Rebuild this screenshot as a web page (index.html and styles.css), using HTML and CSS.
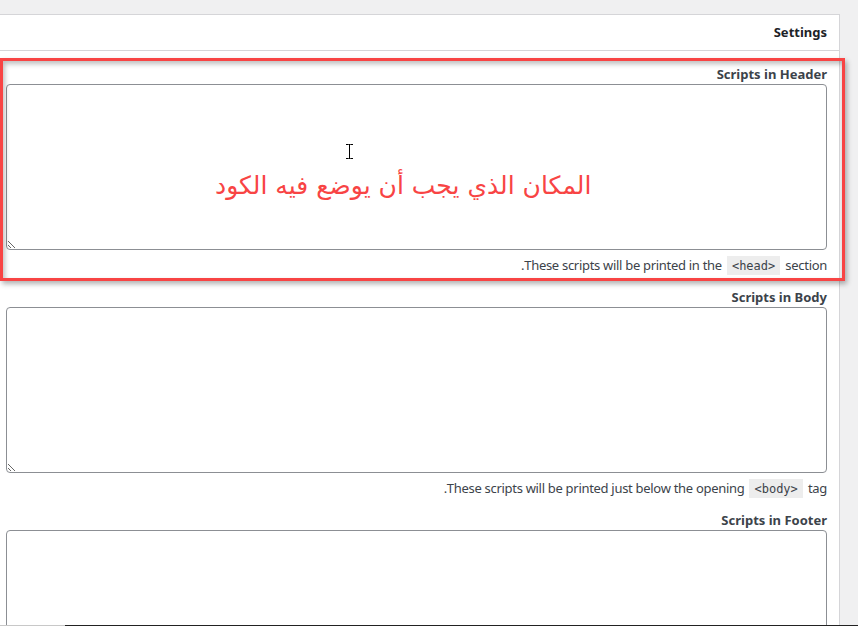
FILE: index.html
```html
<!DOCTYPE html>
<html>
<head>
  <meta name="viewport" content="width=device-width, initial-scale=1.0">
  <title>Settings</title>
  <link rel="stylesheet" href="styles.css">
</head>
<body>
  <div class="panel" dir="rtl">
    <div class="panel-head">Settings</div>

    <div class="panel-body">
      <div class="field is-marked">
        <label class="field-label" for="header-scripts">Scripts in Header</label>
        <textarea id="header-scripts" class="field-input"></textarea>
        <p class="field-desc">These scripts will be printed in the <code>&lt;head&gt;</code> section.</p>

        <!-- annotation over the first box -->
        <span class="note">المكان الذي يجب أن يوضع فيه الكود</span>
        <svg class="ibeam" width="7" height="15" viewBox="0 0 7 15">
          <path d="M0 0.5h2.5M4.5 0.5h2.5M3.5 1v13M0 14.5h2.5M4.5 14.5h2.5M2.5 0.5h2M2.5 14.5h2" stroke="#000" stroke-width="1" fill="none"/>
        </svg>
      </div>

      <div class="field">
        <label class="field-label" for="body-scripts">Scripts in Body</label>
        <textarea id="body-scripts" class="field-input"></textarea>
        <p class="field-desc">These scripts will be printed just below the opening <code>&lt;body&gt;</code> tag.</p>
      </div>

      <div class="field">
        <label class="field-label" for="footer-scripts">Scripts in Footer</label>
        <textarea id="footer-scripts" class="field-input"></textarea>
        <p class="field-desc">These scripts will be printed above the closing <code>&lt;/body&gt;</code> tag.</p>
      </div>
    </div>
  </div>

  <div class="scrollbar"></div>
</body>
</html>
```

FILE: styles.css
```css
body {
  margin: 0;
  padding: 0;
  background-color: #f0f0f1;
  font-family: "Noto Sans", "Open Sans", sans-serif;
  font-size: 13px;
  color: #3c434a;
  overflow: hidden;
}

.panel {
  width: 839px;
  min-height: 700px;
  margin-top: 14px;
  background-color: #ffffff;
  border-top: 1px solid #d5d5d8;
  border-right: 1px solid #d5d5d8;
}

.panel-head {
  height: 35px;
  line-height: 35px;
  padding-right: 12px;
  border-bottom: 1px solid #d5d5d8;
  font-size: 13px;
  font-weight: 700;
  color: #1d2327;
}

.panel-body {
  padding: 13px 12px 0 6px;
}

.field {
  position: relative;
  margin-bottom: 12px;
}

.field-label {
  display: block;
  height: 20px;
  line-height: 20px;
  font-weight: 700;
  color: #3c434a;
}

.field-input {
  display: block;
  width: 100%;
  height: 166px;
  box-sizing: border-box;
  margin: 0;
  border: 1px solid #8c8f94;
  border-radius: 4px;
  background: #ffffff;
}

.field-desc {
  height: 20px;
  margin: 5px 0 0;
  line-height: 20px;
  letter-spacing: -0.3px;
  color: #3c434a;
}

.field-desc code {
  padding: 3px 5px 2px;
  margin: 0 2px;
  background: #ededed;
  font-family: "DejaVu Sans Mono", monospace;
  font-size: 12px;
  line-height: 1;
  letter-spacing: 0;
  color: #3c434a;
}

/* red frame round the header box */
.is-marked::after {
  content: "";
  position: absolute;
  top: -6px;
  bottom: -6px;
  left: -6px;
  right: -18px;
  border: 3px solid #f84444;
  box-shadow: 2px 3px 5px rgba(0, 0, 0, 0.3), inset 2px 3px 5px rgba(0, 0, 0, 0.25);
  pointer-events: none;
}

.note {
  position: absolute;
  top: 107px;
  left: 209px;
  white-space: nowrap;
  font-family: "DejaVu Sans", sans-serif;
  font-size: 25px;
  color: #f84444;
  pointer-events: none;
}

.ibeam {
  position: absolute;
  top: 80px;
  left: 340px;
}

.scrollbar {
  position: fixed;
  left: 0;
  right: 0;
  bottom: 0;
  height: 1px;
  background: linear-gradient(to right, #c8c8c8 65px, #222222 65px);
}
```
